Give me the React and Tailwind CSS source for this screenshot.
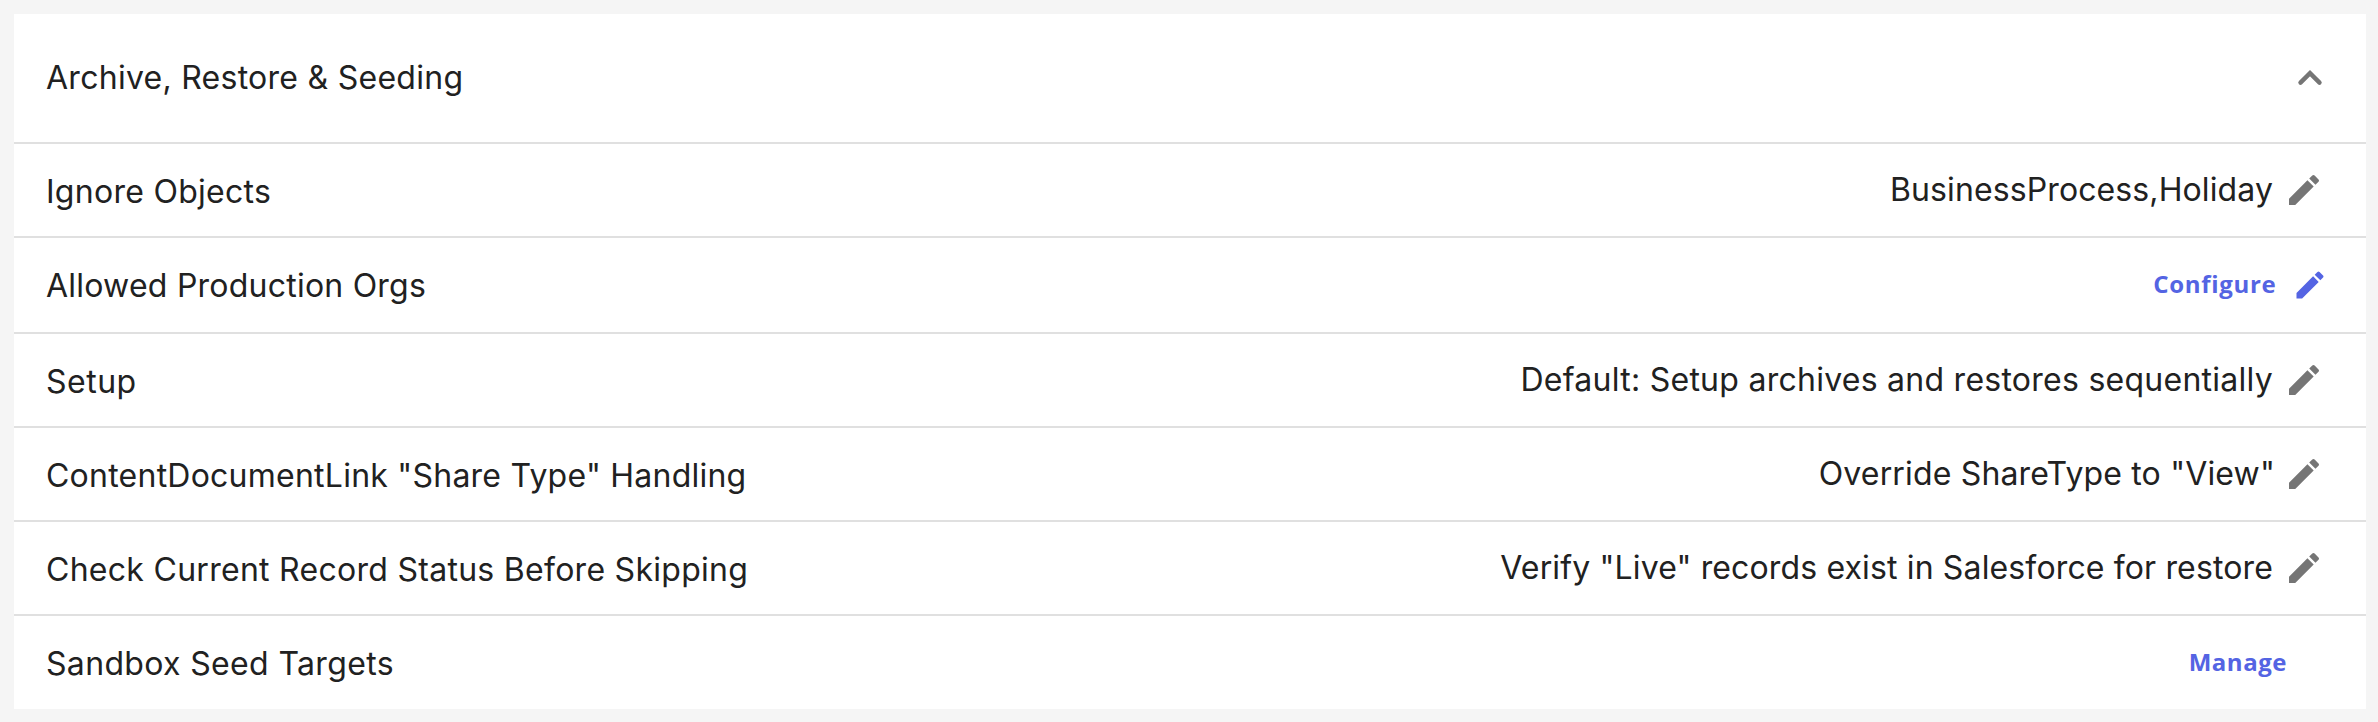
function EditIcon({ className }) {
  return (
    <svg viewBox="0 0 24 24" fill="currentColor" aria-hidden="true" className={className}>
      <path d="M3 17.25V21h3.75L17.81 9.94l-3.75-3.75L3 17.25zM20.71 7.04c.39-.39.39-1.02 0-1.41l-2.34-2.34a.9959.9959 0 0 0-1.41 0l-1.83 1.83 3.75 3.75 1.83-1.83z" />
    </svg>
  );
}

function ChevronUpIcon({ className }) {
  return (
    <svg viewBox="0 0 24 24" fill="none" stroke="currentColor" strokeWidth="2.2" strokeLinecap="round" aria-hidden="true" className={className}>
      <path d="M7.25 14.3 12 9.55l4.75 4.75" />
    </svg>
  );
}

function Row({ label, labelClass = "", tall, children }) {
  return (
    <div className={`flex justify-between border-b-2 border-[#e0e0e0] pl-8 last:border-b-0 ${tall ? "h-24" : "h-[94px]"}`}>
      <span className={`pt-6 leading-[47px] ${labelClass}`}>{label}</span>
      {children}
    </div>
  );
}

function EditableRow({ label, labelClass, value, valueClass }) {
  return (
    <Row label={label} labelClass={labelClass}>
      <div className="flex items-start pr-[42px]">
        <span className={`pt-[22px] leading-[47px] ${valueClass}`}>{value}</span>
        <button type="button" aria-label={`Edit ${label}`} className="pt-[26px] text-[#757575]">
          <EditIcon className="size-10" />
        </button>
      </div>
    </Row>
  );
}

export default function App() {
  return (
    <div className="h-[722px] w-full bg-[#f5f5f5] pt-3.5 pr-3 pb-[13px] pl-3.5">
      <section className="h-full overflow-hidden bg-white font-[Inter,sans-serif] text-[32px] text-[#212121]">
        <header className="flex h-[130px] items-start justify-between border-b-2 border-[#e0e0e0] pt-10 pr-8 pl-8">
          <h2 className="leading-[47px] tracking-[0.27px]">Archive, Restore &amp; Seeding</h2>
          <button type="button" aria-label="Collapse section" className="text-[#757575]">
            <ChevronUpIcon className="size-12" />
          </button>
        </header>
        <EditableRow
          label="Ignore Objects"
          labelClass="tracking-[0.28px]"
          value="BusinessProcess,Holiday"
          valueClass="mr-[11px] tracking-[0.11px]"
        />
        <Row label="Allowed Production Orgs" labelClass="tracking-[0.23px]" tall>
          <button type="button" className="flex items-start pr-[38.5px] text-[#5464e3]">
            <span className="pt-[26px] font-['Open_Sans',sans-serif] text-2xl leading-[40px] font-bold tracking-[0.69px]">Configure</span>
            <EditIcon className="mt-[29px] ml-[15px] size-9" />
          </button>
        </Row>
        <EditableRow
          label="Setup"
          labelClass="tracking-[0.5px]"
          value="Default: Setup archives and restores sequentially"
          valueClass="mr-[11px] tracking-[0.26px]"
        />
        <EditableRow
          label={'ContentDocumentLink "Share Type" Handling'}
          labelClass="tracking-[0.24px]"
          value={'Override ShareType to "View"'}
          valueClass="mr-[9px] tracking-[0.16px]"
        />
        <EditableRow
          label="Check Current Record Status Before Skipping"
          labelClass="tracking-[0.28px]"
          value={'Verify "Live" records exist in Salesforce for restore'}
          valueClass="mr-[11px] tracking-[0.14px]"
        />
        <Row label="Sandbox Seed Targets" labelClass="tracking-[0.34px]">
          <button type="button" className="flex items-start pr-[79px] text-[#5464e3]">
            <span className="pt-[26px] font-['Open_Sans',sans-serif] text-2xl leading-[40px] font-bold tracking-[0.54px]">Manage</span>
          </button>
        </Row>
      </section>
    </div>
  );
}
